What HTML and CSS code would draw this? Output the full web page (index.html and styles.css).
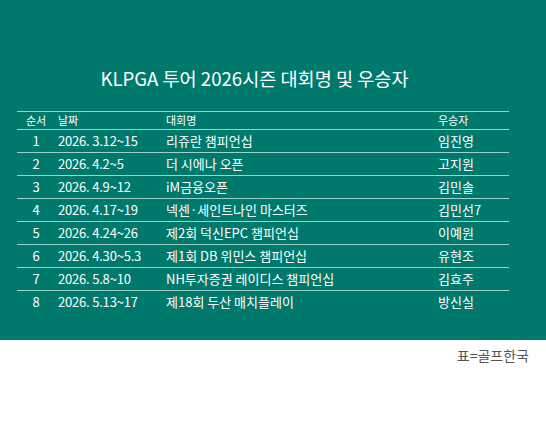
FILE: index.html
```html
<!DOCTYPE html>
<html>
<head>
  <meta charset="UTF-8">
  <title>KLPGA 투어 2026시즌 대회명 및 우승자</title>
  <link rel="stylesheet" href="styles.css">
</head>
<body>

<div class="panel">
  <h1 class="title">KLPGA 투어 2026시즌 대회명 및 우승자</h1>

  <table class="results">
    <colgroup>
      <col class="c-no"><col class="c-date"><col class="c-name"><col class="c-win">
    </colgroup>
    <thead>
      <tr>
        <th class="no">순서</th>
        <th>날짜</th>
        <th>대회명</th>
        <th>우승자</th>
      </tr>
    </thead>
    <tbody>
      <tr><td class="no">1</td><td class="date">2026. 3.12~15</td><td>리쥬란 챔피언십</td><td>임진영</td></tr>
      <tr><td class="no">2</td><td class="date">2026. 4.2~5</td><td>더 시에나 오픈</td><td>고지원</td></tr>
      <tr><td class="no">3</td><td class="date">2026. 4.9~12</td><td>iM금융오픈</td><td>김민솔</td></tr>
      <tr><td class="no">4</td><td class="date">2026. 4.17~19</td><td>넥센·세인트나인 마스터즈</td><td>김민선7</td></tr>
      <tr><td class="no">5</td><td class="date">2026. 4.24~26</td><td>제2회 덕신EPC 챔피언십</td><td>이예원</td></tr>
      <tr><td class="no">6</td><td class="date">2026. 4.30~5.3</td><td>제1회 DB 위민스 챔피언십</td><td>유현조</td></tr>
      <tr><td class="no">7</td><td class="date">2026. 5.8~10</td><td>NH투자증권 레이디스 챔피언십</td><td>김효주</td></tr>
      <tr><td class="no">8</td><td class="date">2026. 5.13~17</td><td>제18회 두산 매치플레이</td><td>방신실</td></tr>
    </tbody>
  </table>
</div>

<p class="source">표=골프한국</p>

</body>
</html>
```

FILE: styles.css
```css
body {
  margin: 0;
  font-family: "Noto Sans CJK KR", "Noto Sans", sans-serif;
  background: #fff;
}
.panel {
  background: #00796d;
  color: #fff;
  padding: 64px 0 27px 17px;
  height: 249px;
}
.title {
  font-size: 18.6px;
  font-weight: normal;
  letter-spacing: 0;
  line-height: 28px;
  height: 28px;
  margin: 0 0 19px 0;
  padding-right: 54px;
  text-align: center;
}
.results {
  width: 492px;
  border-collapse: collapse;
  table-layout: fixed;
}
.c-no { width: 38px; }
.c-date { width: 111px; }
.c-name { width: 272px; }
.c-win { width: 71px; }
.results thead tr {
  border-top: 1px solid #9dd3ca;
  border-bottom: 1px solid #9dd3ca;
}
.results th {
  font-size: 11px;
  font-weight: normal;
  text-align: left;
  height: 17px;
  padding: 0;
  line-height: 17px;
}
.results th:nth-child(2) { padding-left: 3px; }
.results td {
  font-size: 13px;
  letter-spacing: 0;
  height: 22px;
  padding: 0;
  line-height: 22px;
  white-space: nowrap;
}
.results tbody tr {
  border-bottom: 1px solid #9dd3ca;
}
.results tbody tr:last-child {
  border-bottom: none;
}
.results .no {
  text-align: center;
}
.results td.date {
  padding-left: 3px;
  letter-spacing: -0.2px;
}
.source {
  margin: 5px 17px 0 0;
  text-align: right;
  font-size: 14px;
  color: #555;
}
```
